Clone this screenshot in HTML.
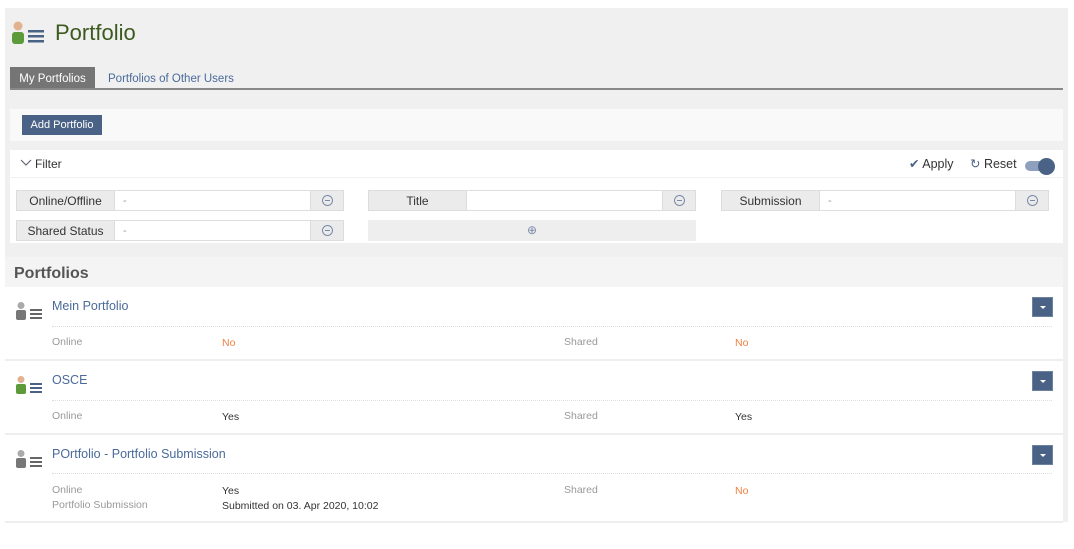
<!DOCTYPE html>
<html><head><meta charset="utf-8"><style>
*{box-sizing:border-box;margin:0;padding:0}
body{width:1074px;height:549px;background:#fff;font-family:"Liberation Sans",sans-serif;position:relative;overflow:hidden;color:#333}
.a{position:absolute}
.lbl{position:absolute;background:#ebebeb;border:1px solid #ddd;font-size:12px;color:#333;text-align:center;line-height:20px;height:21px}
.inp{position:absolute;background:#fff;border:1px solid #ddd;font-size:11px;color:#999;padding-left:8px;line-height:20px;height:21px}
.btn{position:absolute;background:#ebebeb;border:1px solid #ddd;height:21px;text-align:center}
.circ{display:inline-block;width:11px;height:11px;border:1px solid #7a8aa8;border-radius:50%;margin-top:4px;position:relative}
.circ:after{content:"";position:absolute;left:2px;top:4px;width:5px;height:1px;background:#7a8aa8}
.title{position:absolute;left:52px;font-size:12.5px;color:#4a6a9a}
.dot{position:absolute;left:52px;width:1000px;border-top:1px dotted #ddd}
.k{position:absolute;font-size:10.5px;color:#999}
.v{position:absolute;font-size:10.5px;color:#333}
.o{color:#f08040}
.dd{position:absolute;left:1032px;width:21px;height:20px;background:#4a6285;border:1px solid #6d82a0}
.dd:after{content:"";position:absolute;left:7px;top:8px;border-left:3px solid transparent;border-right:3px solid transparent;border-top:3px solid #fff}
.sep{position:absolute;left:5px;width:1058px;height:2px;background:#eee}
</style></head><body>
<div class="a" style="left:5px;top:8px;width:1063px;height:249px;background:#f0f0f0"></div>
<div class="a" style="left:1063px;top:257px;width:5px;height:265px;background:#f0f0f0"></div>
<svg class="a" style="left:11px;top:21px" width="36" height="24"><circle cx="7" cy="5" r="4.5" fill="#e0b28f"/><rect x="1" y="11" width="12" height="12" rx="3" fill="#5c9a3a"/><rect x="17" y="9" width="16" height="2.5" fill="#4a6285"/><rect x="17" y="14" width="16" height="2.5" fill="#4a6285"/><rect x="17" y="19" width="16" height="2.5" fill="#4a6285"/></svg>
<div class="a" style="left:55px;top:20px;font-size:22px;color:#3d5a1e">Portfolio</div>
<div class="a" style="left:10px;top:67px;width:85px;height:22px;background:#757575;color:#fff;font-size:11.5px;line-height:24px;text-align:center">My Portfolios</div>
<div class="a" style="left:108px;top:73px;font-size:11.5px;color:#4a6a9a">Portfolios of Other Users</div>
<div class="a" style="left:10px;top:88px;width:1053px;height:2px;background:#888"></div>
<div class="a" style="left:10px;top:109px;width:1053px;height:32px;background:#f9f9f9"></div>
<div class="a" style="left:22px;top:115px;width:80px;height:20px;background:#4a6285;color:#fff;font-size:11px;line-height:21px;text-align:center">Add Portfolio</div>
<div class="a" style="left:10px;top:150px;width:1053px;height:93px;background:#fff"></div>
<div class="a" style="left:10px;top:177px;width:1053px;height:1px;background:#f0f0f0"></div>
<svg class="a" style="left:20px;top:159px" width="12" height="8"><path d="M1 1L6 6L11 1" stroke="#667" fill="none" stroke-width="1.2"/></svg>
<div class="a" style="left:35px;top:157px;font-size:12px;color:#333">Filter</div>
<div class="a" style="left:909px;top:156px;font-size:12.5px;color:#333"><span style="color:#4a6285">✔</span> Apply</div>
<div class="a" style="left:970px;top:156px;font-size:12.5px;color:#333"><span style="color:#4a6285">↻</span> Reset</div>
<div class="a" style="left:1025px;top:161px;width:28px;height:10px;border-radius:5px;background:#8ea0bd"></div>
<div class="a" style="left:1038px;top:158px;width:17px;height:17px;border-radius:50%;background:#4a6285"></div>
<div class="lbl" style="left:16px;top:190px;width:99px">Online/Offline</div><div class="inp" style="left:114px;top:190px;width:197px">-</div><div class="btn" style="left:310px;top:190px;width:34px"><span class="circ"></span></div>
<div class="lbl" style="left:368px;top:190px;width:99px">Title</div><div class="inp" style="left:466px;top:190px;width:197px"></div><div class="btn" style="left:662px;top:190px;width:34px"><span class="circ"></span></div>
<div class="lbl" style="left:721px;top:190px;width:99px">Submission</div><div class="inp" style="left:819px;top:190px;width:197px">-</div><div class="btn" style="left:1015px;top:190px;width:34px"><span class="circ"></span></div>
<div class="lbl" style="left:16px;top:220px;width:99px">Shared Status</div><div class="inp" style="left:114px;top:220px;width:197px">-</div><div class="btn" style="left:310px;top:220px;width:34px"><span class="circ"></span></div>
<div class="a" style="left:368px;top:220px;width:328px;height:21px;background:#eee;text-align:center;color:#7a8aa8;font-size:12px;line-height:21px">⊕</div>
<div class="a" style="left:5px;top:257px;width:1058px;height:30px;background:#f4f4f4"></div>
<div class="a" style="left:14px;top:265px;font-size:16px;font-weight:bold;color:#555">Portfolios</div>

<svg class="a" style="left:16px;top:302px" width="28" height="18"><circle cx="5" cy="3.5" r="3.5" fill="#aaa"/><rect x="0" y="8" width="10" height="10" rx="2" fill="#777"/><rect x="14" y="7" width="12" height="2" fill="#666"/><rect x="14" y="11" width="12" height="2" fill="#666"/><rect x="14" y="15" width="12" height="2" fill="#666"/></svg>
<div class="title" style="top:299px">Mein Portfolio</div><div class="dd" style="top:297px"></div>
<div class="dot" style="top:326px"></div>
<div class="k" style="left:52px;top:336px">Online</div><div class="v o" style="left:222px;top:337px">No</div>
<div class="k" style="left:564px;top:336px">Shared</div><div class="v o" style="left:735px;top:337px">No</div>
<div class="sep" style="top:359px"></div>

<svg class="a" style="left:16px;top:376px" width="28" height="18"><circle cx="5" cy="3.5" r="3.5" fill="#e0b28f"/><rect x="0" y="8" width="10" height="10" rx="2" fill="#5c9a3a"/><rect x="14" y="7" width="12" height="2" fill="#4a6285"/><rect x="14" y="11" width="12" height="2" fill="#4a6285"/><rect x="14" y="15" width="12" height="2" fill="#4a6285"/></svg>
<div class="title" style="top:373px">OSCE</div><div class="dd" style="top:371px"></div>
<div class="dot" style="top:400px"></div>
<div class="k" style="left:52px;top:410px">Online</div><div class="v" style="left:222px;top:411px">Yes</div>
<div class="k" style="left:564px;top:410px">Shared</div><div class="v" style="left:735px;top:411px">Yes</div>
<div class="sep" style="top:433px"></div>

<svg class="a" style="left:16px;top:450px" width="28" height="18"><circle cx="5" cy="3.5" r="3.5" fill="#aaa"/><rect x="0" y="8" width="10" height="10" rx="2" fill="#777"/><rect x="14" y="7" width="12" height="2" fill="#666"/><rect x="14" y="11" width="12" height="2" fill="#666"/><rect x="14" y="15" width="12" height="2" fill="#666"/></svg>
<div class="title" style="top:447px">POrtfolio - Portfolio Submission</div><div class="dd" style="top:445px"></div>
<div class="dot" style="top:473px"></div>
<div class="k" style="left:52px;top:484px">Online</div><div class="v" style="left:222px;top:485px">Yes</div>
<div class="k" style="left:52px;top:499px">Portfolio Submission</div><div class="v" style="left:222px;top:500px">Submitted on 03. Apr 2020, 10:02</div>
<div class="k" style="left:564px;top:484px">Shared</div><div class="v o" style="left:735px;top:485px">No</div>
<div class="sep" style="top:521px"></div>
</body></html>
